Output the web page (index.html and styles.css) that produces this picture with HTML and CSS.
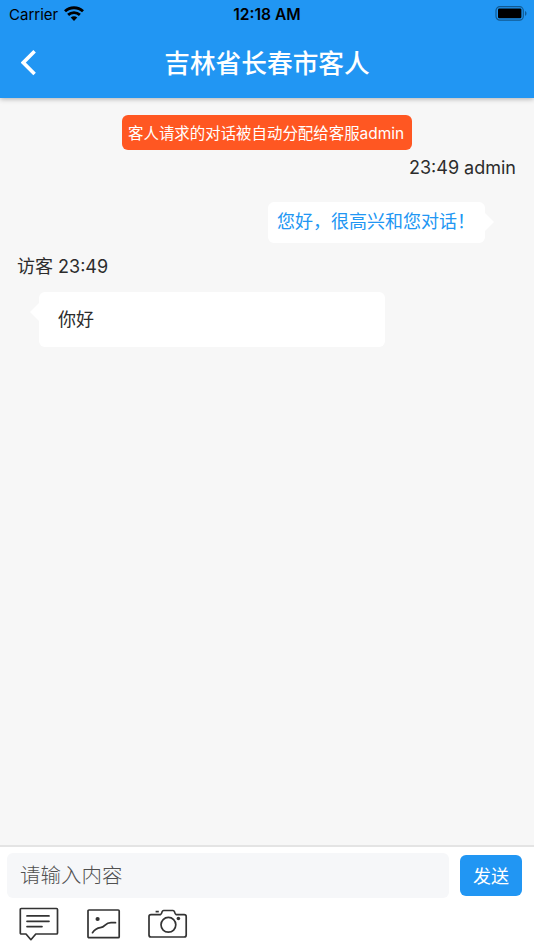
FILE: index.html
```
<!DOCTYPE html>
<html lang="zh-CN">
	<head>
		<meta charset="UTF-8" />
		<meta name="viewport" content="width=device-width, initial-scale=1.0" />
		<title>吉林省长春市客人</title>
		<link rel="stylesheet" href="styles.css">
	</head>

	<body>
		<header class="header">
			<div class="statusBar">
				<div class="carrier">
					<span>Carrier</span>
					<svg class="wifi" width="20" height="15" viewBox="0 0 20 15" fill="none" stroke="#000" stroke-width="2.9">
						<path d="M1 5.2C6 .6 14 .6 19 5.2" />
						<path d="M4.1 8.9C7.5 5.9 12.5 5.9 15.9 8.9" />
						<path d="M10 14.9L6.7 11.6C8.6 9.9 11.4 9.9 13.3 11.6Z" fill="#000" stroke="none" />
					</svg>
				</div>
				<span class="clock">12:18 AM</span>
				<svg class="battery" width="32" height="15" viewBox="0 0 32 15">
					<rect x="1" y=".7" width="27.3" height="13.4" rx="3.8" fill="none" stroke="#115a92" stroke-width="1.2" />
					<rect x="3" y="2.6" width="23.4" height="9.6" rx="1.2" />
					<path d="M30 5C32 5.8 32 9 30 9.8Z" fill="#125c96" />
				</svg>
			</div>
			<div class="navBar">
				<svg class="back" width="16" height="26" viewBox="0 0 16 26" fill="none" stroke="#fff" stroke-width="3.6">
					<path d="M13.6 1.3L2.2 12.6L13.6 24" />
				</svg>
				<h1 class="title">吉林省长春市客人</h1>
			</div>
		</header>

		<main class="chat">
			<div class="notice">客人请求的对话被自动分配给客服admin</div>
			<div class="meta metaRight">23:49 admin</div>
			<div class="bubble bubbleRight">您好，很高兴和您对话！</div>
			<div class="meta metaLeft">访客 23:49</div>
			<div class="bubble bubbleLeft">你好</div>
		</main>

		<footer class="footer">
			<div class="inputRow">
				<input class="messageInput" type="text" placeholder="请输入内容" />
				<button class="sendButton">发送</button>
			</div>
			<div class="tools">
				<!-- quick replies -->
				<svg width="40" height="34" viewBox="0 0 40 34" fill="none" stroke="#333" stroke-width="1.7" stroke-linejoin="round">
					<path d="M2.3 1.5H37.5Q38.5 1.5 38.5 2.5V26Q38.5 27 37.5 27H16.8L11.9 32.7L7 27H2.3Q1.3 27 1.3 26V2.5Q1.3 1.5 2.3 1.5Z" />
					<path d="M8 8.9H30M8 14.3H30M8 19.6H23" stroke-linecap="round" />
				</svg>
				<!-- photo -->
				<svg width="34" height="30" viewBox="0 0 34 30" fill="none" stroke="#333" stroke-width="1.7">
					<rect x="1" y="1" width="31.2" height="27.7" rx="1" />
					<circle cx="10.6" cy="10" r="2.1" fill="#333" stroke="none" />
					<path d="M5.5 23.7C8 20.2 9.7 19.2 13.3 18.7C19 18 17.5 13.7 24 13.7H28.5" stroke-linecap="round" />
				</svg>
				<!-- camera -->
				<svg width="40" height="30" viewBox="0 0 40 30" fill="none" stroke="#333" stroke-width="1.7" stroke-linejoin="round">
					<path d="M3 5.6H12.4Q13.5 5.2 14.2 2.6Q14.6 1.5 15.6 1.5H25Q26 1.5 26.4 2.6Q27.1 5.2 28.2 5.6H36.2Q38.2 5.6 38.2 7.6V26Q38.2 28 36.2 28H3Q1 28 1 26V7.6Q1 5.6 3 5.6Z" />
					<path d="M7.6 2.6H10.8" />
					<circle cx="20.4" cy="15.8" r="7.4" />
					<circle cx="30.4" cy="9.5" r="1.8" fill="#333" stroke="none" />
				</svg>
			</div>
		</footer>
	</body>
</html>
```
FILE: styles.css
```
* {
	box-sizing: border-box;
}

body {
	margin: 0;
	height: 100vh;
	display: flex;
	flex-direction: column;
	overflow: hidden;
	background: #f7f7f7;
	color: #2c2c2c;
	font-family: Inter, "Noto Sans CJK SC", sans-serif;
	font-size: 18px;
}

svg {
	display: block;
	flex: none;
}

.header {
	height: 98px;
	flex: none;
	background: #2196f3;
	box-shadow: 0 1px 5px rgba(0, 0, 0, 0.3);
}

.statusBar {
	height: 28px;
	padding: 0 7px 0 9px;
	display: grid;
	grid-template-columns: 1fr auto 1fr;
	align-items: center;
	color: #000;
	font-size: 15px;
	line-height: 29px;
}

.carrier {
	display: flex;
	align-items: center;
	gap: 6px;
}

.wifi {
	margin-top: -3px;
}

.clock {
	margin-right: 2px;
	font-weight: 600;
	font-size: 15.6px;
}

.battery {
	justify-self: end;
	margin-top: -2px;
}

.navBar {
	height: 70px;
	padding: 0 21px;
	display: grid;
	grid-template-columns: 16px 1fr 16px;
	align-items: center;
}

.title {
	margin: 1px 0 0;
	color: #fff;
	font-size: 25.7px;
	font-weight: 500;
	line-height: 38px;
	text-align: center;
}

.chat {
	flex: 1;
	padding: 17px 18px 0;
	display: flex;
	flex-direction: column;
	align-items: flex-start;
}

.notice {
	align-self: center;
	width: 290px;
	height: 35px;
	padding: 0 6px;
	border-radius: 6px;
	background: #ff5722;
	color: #fff;
	font-size: 15.45px;
	line-height: 37px;
	white-space: nowrap;
}

.meta {
	height: 26px;
	line-height: 27px;
}

.metaRight {
	align-self: flex-end;
	margin-top: 4px;
}

.metaLeft {
	margin-left: -1px;
	line-height: 28px;
}

.bubble {
	position: relative;
	border-radius: 6px;
	background: #fff;
}

/* little tail on the side of each bubble */
.bubble::after {
	content: "";
	position: absolute;
	border: 9px solid transparent;
}

.bubbleRight {
	align-self: flex-end;
	width: 217px;
	height: 41px;
	margin: 22px 31px 10px 0;
	padding-left: 9px;
	color: #2196f3;
	line-height: 40px;
	white-space: nowrap;
}

.bubbleRight::after {
	top: 11px;
	right: -18px;
	border-left-color: #fff;
}

.bubbleLeft {
	width: 346px;
	height: 55px;
	margin: 13px 0 0 21px;
	padding-left: 19px;
	line-height: 56px;
}

.bubbleLeft::after {
	top: 11px;
	left: -18px;
	border-right-color: #fff;
}

.footer {
	height: 105px;
	flex: none;
	padding: 6px 12px 0 7px;
	border-top: 2px solid #e4e4e4;
	background: #fff;
}

.inputRow {
	display: flex;
	align-items: center;
	gap: 11px;
}

.messageInput {
	flex: 1;
	min-width: 0;
	height: 45px;
	padding: 0 13px 1px;
	border: none;
	border-radius: 6px;
	background: #f6f7f9;
	font: 300 20.5px Inter, "Noto Sans CJK SC", sans-serif;
}

.messageInput::placeholder {
	color: #505050;
}

.sendButton {
	width: 62px;
	height: 41px;
	padding: 2px 0 0;
	border: none;
	border-radius: 6px;
	background: #2196f3;
	color: #fff;
	font: 18px/39px Inter, "Noto Sans CJK SC", sans-serif;
}

.tools {
	display: flex;
	align-items: center;
	gap: 27.5px;
	padding: 9px 0 0 12px;
}
```
